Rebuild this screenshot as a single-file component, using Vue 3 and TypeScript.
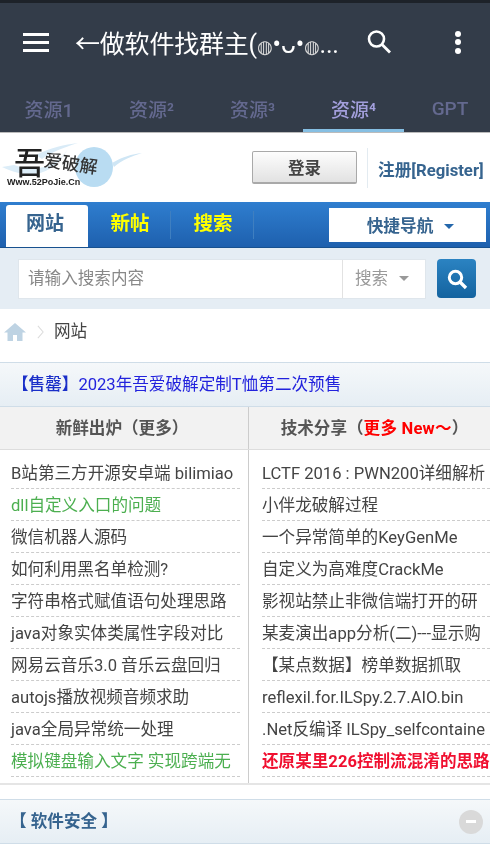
<script setup lang="ts">
interface Post {
  text: string
  color?: string
}

const tabs = ['资源1', '资源²', '资源³', '资源⁴', 'GPT']

const leftPosts: Post[] = [
  { text: 'B站第三方开源安卓端 bilimiao' },
  { text: 'dll自定义入口的问题', color: 'green' },
  { text: '微信机器人源码' },
  { text: '如何利用黑名单检测?' },
  { text: '字符串格式赋值语句处理思路' },
  { text: 'java对象实体类属性字段对比' },
  { text: '网易云音乐3.0 音乐云盘回归' },
  { text: 'autojs播放视频音频求助' },
  { text: 'java全局异常统一处理' },
  { text: '模拟键盘输入文字 实现跨端无', color: 'green' }
]

const rightPosts: Post[] = [
  { text: 'LCTF 2016 : PWN200详细解析' },
  { text: '小伴龙破解过程' },
  { text: '一个异常简单的KeyGenMe' },
  { text: '自定义为高难度CrackMe' },
  { text: '影视站禁止非微信端打开的研' },
  { text: '某麦演出app分析(二)---显示购' },
  { text: '【某点数据】榜单数据抓取' },
  { text: 'reflexil.for.ILSpy.2.7.AIO.bin' },
  { text: '.Net反编译 ILSpy_selfcontaine' },
  { text: '还原某里226控制流混淆的思路', color: 'red' }
]

const columns = [leftPosts, rightPosts]
</script>

<template>
  <div class="page">
    <div class="status"></div>

    <header class="appbar">
      <div class="toolbar">
        <div class="menu"><span></span><span></span><span></span></div>
        <div class="title">←做软件找群主(<i>◍</i>•ᴗ•<i>◍</i>...</div>
        <svg class="search-icon" viewBox="0 0 28 28" width="28" height="28">
          <circle cx="11.5" cy="11" r="7.5" fill="none" stroke="#fff" stroke-width="2.6" />
          <path d="M17 16.5l8 8" stroke="#fff" stroke-width="2.8" />
        </svg>
        <div class="dots"><span></span><span></span><span></span></div>
      </div>
      <div class="tabs">
        <div v-for="(tab, i) in tabs" :key="tab" class="tab" :class="{ active: i === 3 }">{{ tab }}</div>
      </div>
    </header>

    <div class="site-head">
      <div class="logo">
        <svg class="wing" viewBox="0 0 140 46" width="140" height="46">
          <ellipse cx="92" cy="24" rx="19" ry="20" fill="#b9dcf2" />
          <path d="M0 24C30 38 50 32 66 6c-12 18-32 24-54 16z" fill="#dcedf8" />
          <path d="M110 20c10-6 20-9 30-10-10 3-20 7-28 14z" fill="#cfe6f5" />
          <path d="M34 12C50 4 62 2 76 0 60 5 50 9 40 16z" fill="#d9ebf7" />
        </svg>
        <span class="logo-big">吾</span>
        <span class="logo-mid">爱破解</span>
        <span class="logo-url">Www.52PoJie.Cn</span>
      </div>
      <button class="login">登录</button>
      <div class="head-line"></div>
      <a class="register">注册[Register]</a>
    </div>

    <nav class="nav">
      <div class="nav-item current">网站</div>
      <div class="nav-item">新帖</div>
      <div class="nav-line"></div>
      <div class="nav-item">搜索</div>
      <div class="nav-line"></div>
      <div class="quick">快捷导航<i class="caret"></i></div>
    </nav>

    <div class="search-bar">
      <div class="search-box">
        <div class="search-input">请输入搜索内容</div>
        <div class="search-type">搜索<i class="caret grey"></i></div>
      </div>
      <div class="search-btn">
        <svg viewBox="0 0 24 24" width="24" height="24">
          <circle cx="10.5" cy="10.5" r="6.2" fill="none" stroke="#fff" stroke-width="3" />
          <path d="M15 15l6 6" stroke="#fff" stroke-width="3.4" />
        </svg>
      </div>
    </div>

    <div class="crumb">
      <svg class="home" viewBox="0 0 22 18" width="22" height="18">
        <path d="M11 0L0 9.5h3.5V18h5.5v-6h4v6h5.5V9.5H22z" fill="#bed3e3" />
      </svg>
      <svg class="chev" viewBox="0 0 8 16" width="7" height="14">
        <path d="M1 1l6 7-6 7" fill="none" stroke="#dcdcdc" stroke-width="1.2" />
      </svg>
      <span>网站</span>
    </div>

    <div class="notice"><b>【售罄】</b>2023年吾爱破解定制T恤第二次预售</div>

    <div class="board-head">
      <div class="board-title">新鲜出炉（更多）</div>
      <div class="board-title">技术分享（<em>更多 New～</em>）</div>
    </div>

    <div class="board">
      <ul v-for="(posts, c) in columns" :key="c" class="posts">
        <li v-for="post in posts" :key="post.text" :class="post.color">{{ post.text }}</li>
      </ul>
    </div>

    <div class="section">
      <span>【 软件安全 】</span>
      <i class="collapse"></i>
    </div>
  </div>
</template>

<style scoped>
* {
  box-sizing: border-box;
}

.page {
  width: 490px;
  height: 855px;
  overflow: hidden;
  background: #fff;
  font-family: Roboto, "Noto Sans CJK SC", "DejaVu Sans", sans-serif;
  font-size: 16.6px;
  color: #444;
  filter: blur(0.5px);
}

.status {
  height: 3px;
  background: #1d2229;
}

.appbar {
  height: 130px;
  background: #333c49;
  border-bottom: 1px solid #bbb;
}

.toolbar {
  display: flex;
  align-items: center;
  height: 78px;
}

.menu {
  display: flex;
  flex-direction: column;
  gap: 5px;
  width: 26px;
  margin: 0 26px 0 23px;
}

.menu span {
  height: 3px;
  background: #fff;
}

.title {
  width: 261px;
  white-space: nowrap;
  color: #fff;
  font-size: 25px;
  letter-spacing: -0.2px;
}

.title i {
  font-style: normal;
  font-size: 18px;
  color: #d8d8d8;
}

.search-icon {
  margin-left: 29px;
}

.dots {
  display: flex;
  flex-direction: column;
  gap: 2.5px;
  margin-left: 62px;
}

.dots span {
  width: 6px;
  height: 6px;
  border-radius: 50%;
  background: #fff;
}

.tabs {
  display: grid;
  grid-template-columns: 101px 101px 101px 101px 86px;
  height: 51px;
}

.tab {
  display: flex;
  align-items: center;
  justify-content: center;
  padding: 7px 0 0;
  font-size: 19px;
  font-weight: 500;
  color: #64698f;
  border-bottom: 3px solid transparent;
}

.tab:first-child {
  padding-right: 3px;
}

.tab:last-child {
  padding-left: 6px;
}

.tab.active {
  color: #a39fdc;
  border-bottom-color: #86bfe3;
}

.site-head {
  display: flex;
  align-items: center;
  height: 69px;
  padding: 0 6px 0 2px;
}

.logo {
  position: relative;
  width: 140px;
  height: 46px;
  flex: none;
  margin-top: -4px;
}

.wing {
  position: absolute;
  left: 0;
  top: 0;
}

.logo-big {
  position: absolute;
  left: 12px;
  top: 3px;
  font-family: "Noto Sans CJK SC", serif;
  font-size: 31px;
  line-height: 30px;
  font-weight: 500;
  color: #222;
}

.logo-mid {
  position: absolute;
  left: 42px;
  top: 8px;
  font-family: "Noto Sans CJK SC", serif;
  font-size: 18px;
  line-height: 22px;
  font-weight: 500;
  color: #333;
  transform: rotate(8deg);
}

.logo-url {
  position: absolute;
  left: 5px;
  top: 33px;
  font-family: "Liberation Sans", sans-serif;
  font-size: 9px;
  line-height: 12px;
  font-weight: 700;
  color: #222;
}

.login {
  width: 105px;
  height: 33px;
  margin-left: 110px;
  padding: 0;
  border: 1px solid #a9a9a9;
  border-bottom-width: 2px;
  border-radius: 2px;
  background: linear-gradient(#fdfdfd, #e2e2e2);
  font: 700 16.5px Roboto, "Noto Sans CJK SC", sans-serif;
  color: #444;
}

.head-line {
  width: 1px;
  height: 40px;
  margin: 0 10px;
  background: #e3ebf1;
}

.register {
  padding-top: 2px;
  font-size: 16.7px;
  font-weight: 700;
  color: #36648f;
  white-space: nowrap;
}

.nav {
  display: flex;
  align-items: center;
  height: 46px;
  padding: 0 4px 0 6px;
  background: linear-gradient(#2f7ecf, #1e60ae);
  border-bottom: 1px solid #17518f;
}

.nav-item {
  width: 82px;
  padding: 0 0 6px 2px;
  text-align: center;
  font-size: 19.5px;
  font-weight: 700;
  color: #ff0;
  flex: none;
}

.nav-item.current {
  align-self: flex-end;
  height: 42px;
  padding: 0 4px 0 0;
  line-height: 38px;
  background: #fff;
  border-radius: 3px 3px 0 0;
  font-size: 19px;
  font-weight: 700;
  color: #36648f;
}

.nav-line {
  width: 1px;
  height: 28px;
  background: #3f7fc0;
  flex: none;
}

.quick {
  display: flex;
  align-items: center;
  justify-content: center;
  width: 157px;
  height: 34px;
  margin-left: auto;
  padding-left: 6px;
  background: #fff;
  font-size: 16.7px;
  font-weight: 700;
  color: #36648f;
}

.caret {
  display: inline-block;
  width: 0;
  height: 0;
  margin-left: 11px;
  margin-top: 3px;
  border-left: 5px solid transparent;
  border-right: 5px solid transparent;
  border-top: 5px solid #2467ab;
}

.caret.grey {
  border-top-color: #999;
}

.search-bar {
  display: flex;
  align-items: center;
  height: 61px;
  padding: 0 14px 0 18px;
  background: #e5edf4;
}

.search-box {
  display: flex;
  width: 408px;
  height: 40px;
  background: #fff;
  border: 1px solid #dfe6ec;
  color: #888;
}

.search-input {
  width: 324px;
  line-height: 37px;
  padding-left: 9px;
  border-right: 1px solid #e2e2e2;
}

.search-type {
  display: flex;
  align-items: center;
  padding: 0 0 4px 12px;
  color: #999;
}

.search-btn {
  display: flex;
  align-items: center;
  justify-content: center;
  width: 39px;
  height: 39px;
  margin-left: auto;
  border-radius: 4px;
  background: linear-gradient(#2b83c2, #14639f);
}

.crumb {
  display: flex;
  align-items: center;
  height: 53px;
  padding: 0 0 8px 4px;
}

.crumb span {
  position: relative;
  top: -2px;
}

.home {
  margin-right: 11px;
}

.chev {
  margin-right: 10px;
}

.notice {
  display: flex;
  align-items: center;
  height: 45px;
  padding: 0 0 3px 12px;
  border-top: 1px solid #cfdde8;
  border-bottom: 1px solid #cfdde8;
  background: linear-gradient(#f5f8fa, #e6eef4);
  color: #2222dd;
}

.notice b {
  font-weight: 500;
  color: #1a2fc8;
}

.board-head {
  display: grid;
  grid-template-columns: 248px 242px;
  height: 43px;
  background: #f2f2f2;
  border-bottom: 1px solid #ddd;
}

.board-title {
  display: flex;
  align-items: center;
  justify-content: center;
  padding: 0 4px 2px 0;
  font-weight: 700;
  color: #555;
  white-space: nowrap;
}

.board-title + .board-title {
  border-left: 1px solid #ccc;
  padding: 0 0 2px 10px;
}

.board-title em {
  font-style: normal;
  font-weight: 700;
  color: #f00;
  letter-spacing: 0.2px;
}

.board {
  display: grid;
  grid-template-columns: 248px 242px;
  height: 335px;
  border-bottom: 2px solid #e5e5e5;
}

.posts {
  margin: 0;
  padding: 7px 0 0 11px;
  list-style: none;
}

.posts + .posts {
  border-left: 1px solid #ccc;
  padding-left: 13px;
}

.posts li {
  height: 32px;
  line-height: 33px;
  border-bottom: 1px dashed #ccc;
  margin-right: 8px;
  white-space: nowrap;
  color: #444;
}

.posts + .posts li {
  margin-right: 0;
}

.posts li.green {
  color: #4caf50;
}

.posts li.red {
  color: #f01030;
  font-weight: 700;
}

.section {
  display: flex;
  align-items: center;
  justify-content: space-between;
  height: 45px;
  margin-top: 14px;
  padding: 0 7px 0 10px;
  border-top: 1px solid #cfdde8;
  border-bottom: 1px solid #cfdde8;
  background: linear-gradient(#f5f8fa, #e6eef4);
  font-weight: 700;
  color: #36648f;
}

.section span {
  padding-bottom: 3px;
}

.collapse {
  position: relative;
  width: 24px;
  height: 24px;
  border-radius: 50%;
  background: #d9d9d9;
}

.collapse::after {
  content: "";
  position: absolute;
  left: 7px;
  top: 10.5px;
  width: 10px;
  height: 3px;
  background: #fff;
}
</style>
